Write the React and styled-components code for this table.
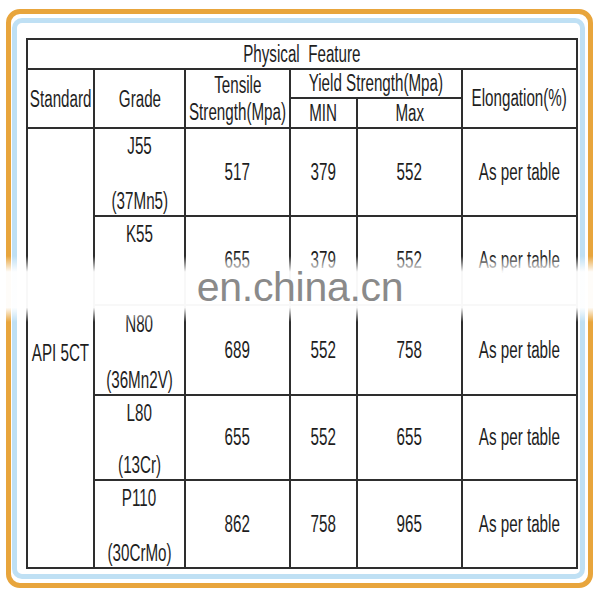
import styled, { createGlobalStyle } from "styled-components";

const GlobalStyle = createGlobalStyle`
  body {
    margin: 0;
    background: #ffffff;
    font-family: "Liberation Sans", Arial, sans-serif;
  }
`;

const Page = styled.div`
  position: relative;
  width: 600px;
  height: 600px;
  padding: 9px 0 0 6px;
  box-sizing: border-box;
  overflow: hidden;
`;

const OuterFrame = styled.div`
  width: 587px;
  height: 579px;
  border: 5px solid #e8a53c;
  border-radius: 14px;
  padding: 4px 3px 4px 1px;
  box-sizing: border-box;
`;

const InnerFrame = styled.div`
  height: 100%;
  border: 5px solid #bfe0f4;
  border-radius: 10px;
  padding: 15px 2px 5px 9px;
  box-sizing: border-box;
`;

const Grid = styled.div`
  display: grid;
  grid-template-columns: 65px 89px 103px 65px 103px 113px;
  grid-template-rows: 28px 27px 28px 86px 87px 88px 83px 86px;
  gap: 2px;
  padding: 2px;
  width: 552px;
  box-sizing: border-box;
  background: #2e2e2e;
`;

const Cell = styled.div`
  grid-column: ${(p) => p.$col};
  grid-row: ${(p) => p.$row};
  background: #ffffff;
  display: flex;
  flex-direction: column;
  align-items: center;
  justify-content: center;
  padding-top: ${(p) => p.$shift || 0}px;
  box-sizing: border-box;
  font-size: 23px;
  line-height: 27px;
  color: #1e1e1e;
  min-width: 0;
`;

const GradeCell = styled(Cell)`
  line-height: 28px;
  padding-top: 3px;
`;

const Label = styled.span`
  display: inline-block;
  white-space: nowrap;
  transform: scaleX(0.66);
`;

const Blank = styled.div`
  height: 28px;
`;

const Watermark = styled.div`
  position: absolute;
  left: 0;
  right: 0;
  top: 256px;
  height: 66px;
  display: flex;
  align-items: center;
  justify-content: center;
  padding-bottom: 3px;
  box-sizing: border-box;
  background: linear-gradient(
    to bottom,
    rgba(255, 255, 255, 0) 0%,
    rgba(255, 255, 255, 0.97) 24%,
    rgba(255, 255, 255, 0.97) 78%,
    rgba(255, 255, 255, 0) 100%
  );
`;

const WatermarkText = styled.span`
  font-family: "Liberation Sans", Arial, sans-serif;
  font-size: 41px;
  line-height: 41px;
  color: #8a8a8a;
  letter-spacing: -0.3px;
`;

const rows = [
  { grade: "J55", sub: "(37Mn5)", tensile: "517", min: "379", max: "552", elong: "As per table" },
  { grade: "K55", sub: "", tensile: "655", min: "379", max: "552", elong: "As per table" },
  { grade: "N80", sub: "(36Mn2V)", tensile: "689", min: "552", max: "758", elong: "As per table" },
  { grade: "L80", sub: "(13Cr)", tensile: "655", min: "552", max: "655", elong: "As per table" },
  { grade: "P110", sub: "(30CrMo)", tensile: "862", min: "758", max: "965", elong: "As per table" },
];

export default function App() {
  return (
    <Page>
      <GlobalStyle />
      <OuterFrame>
        <InnerFrame>
          <Grid>
            <Cell $col="1 / 7" $row="1">
              <Label>Physical&nbsp; Feature</Label>
            </Cell>
            <Cell $col="1" $row="2 / 4" $shift={2}>
              <Label>Standard</Label>
            </Cell>
            <Cell $col="2" $row="2 / 4" $shift={2}>
              <Label>Grade</Label>
            </Cell>
            <Cell $col="3" $row="2 / 4">
              <Label>Tensile</Label>
              <Label>Strength(Mpa)</Label>
            </Cell>
            <Cell $col="4 / 6" $row="2">
              <Label>Yield Strength(Mpa)</Label>
            </Cell>
            <Cell $col="4" $row="3">
              <Label>MIN</Label>
            </Cell>
            <Cell $col="5" $row="3">
              <Label>Max</Label>
            </Cell>
            <Cell $col="6" $row="2 / 4">
              <Label>Elongation(%)</Label>
            </Cell>
            <Cell $col="1" $row="4 / 9" $shift={10}>
              <Label>API 5CT</Label>
            </Cell>
            {rows.map((r, i) => {
              const row = String(i + 4);
              return [
                <GradeCell key={r.grade} $col="2" $row={row}>
                  <Label>{r.grade}</Label>
                  <Blank />
                  {r.sub ? <Label>{r.sub}</Label> : <Blank />}
                </GradeCell>,
                <Cell key={r.grade + "t"} $col="3" $row={row}>
                  <Label>{r.tensile}</Label>
                </Cell>,
                <Cell key={r.grade + "n"} $col="4" $row={row}>
                  <Label>{r.min}</Label>
                </Cell>,
                <Cell key={r.grade + "x"} $col="5" $row={row}>
                  <Label>{r.max}</Label>
                </Cell>,
                <Cell key={r.grade + "e"} $col="6" $row={row}>
                  <Label>{r.elong}</Label>
                </Cell>,
              ];
            })}
          </Grid>
        </InnerFrame>
      </OuterFrame>
      <Watermark>
        <WatermarkText>en.china.cn</WatermarkText>
      </Watermark>
    </Page>
  );
}
